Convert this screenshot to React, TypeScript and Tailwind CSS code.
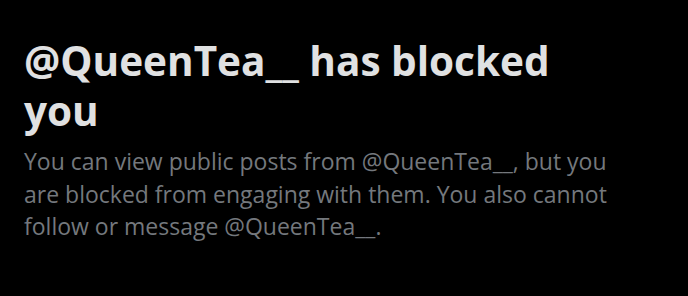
export default function App() {
  return (
    <div className="w-[688px] h-[296px] bg-black overflow-hidden px-6 pt-[36px]" style={{ fontFamily: '"Open Sans", "Liberation Sans", sans-serif' }}>
      <h1 className="text-[40.5px] leading-[50px] font-bold text-[#e0e1e2] w-[580px]">
        @QueenTea__ has blocked you
      </h1>
      <p className="mt-[9px] text-[23px] leading-[32.5px] text-[#74787d] w-[620px]">
        You can view public posts from @QueenTea__, but you are blocked from engaging with them. You also cannot follow or message @QueenTea__.
      </p>
    </div>
  );
}
